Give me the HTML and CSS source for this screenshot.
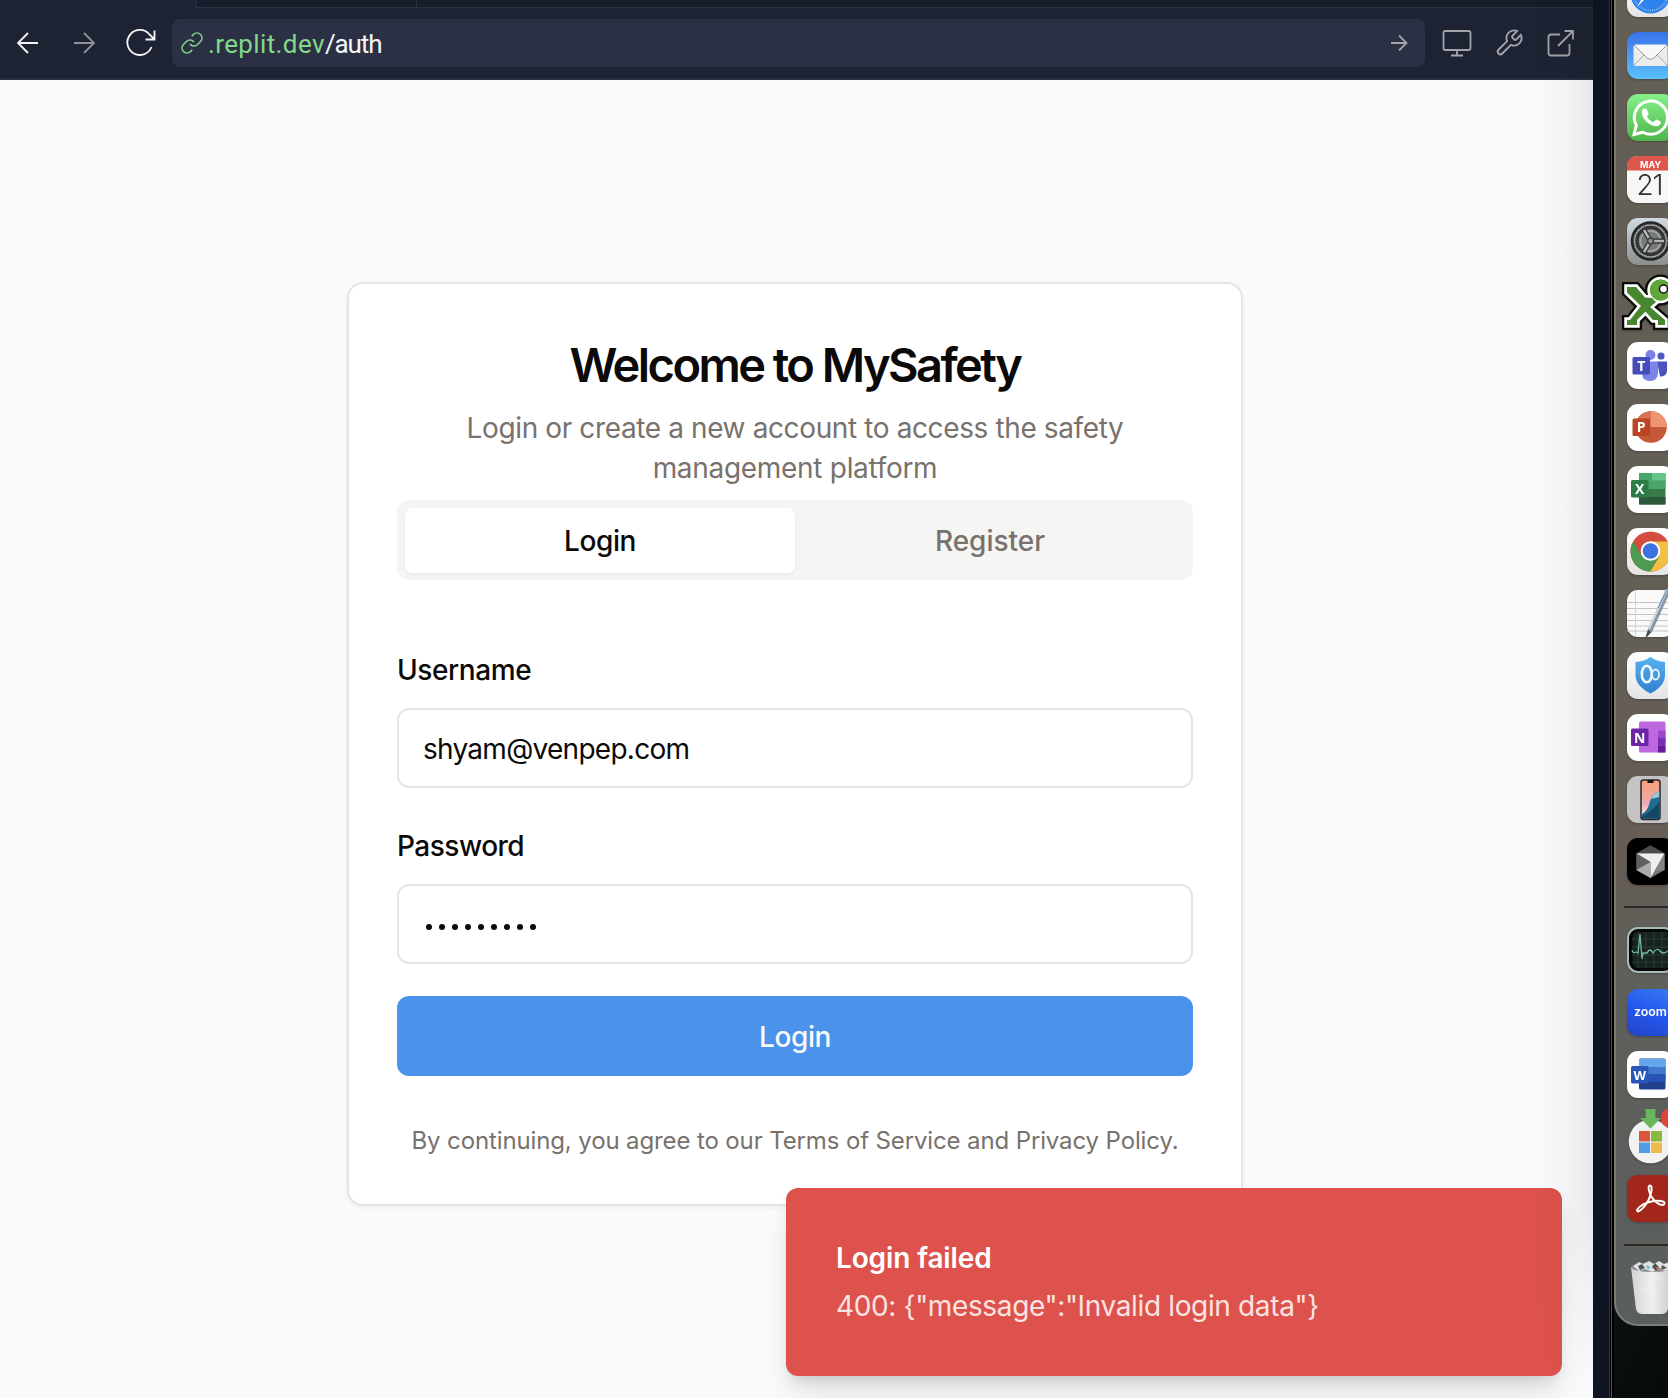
FILE: index.html
```html
<!DOCTYPE html>
<html lang="en">
<head>
<meta charset="utf-8">
<title>MySafety</title>
<link rel="stylesheet" href="styles.css">
</head>
<body>
<div class="desktop">
  <main class="browser">
    <div class="tabstrip"><span class="tab active"></span><span class="tab idle"></span><span class="tab rest"></span></div>
    <header class="toolbar">
      <svg class="nav back" viewBox="0 0 22 22"><path d="M21 11H1M11 1 1 11 11 21"/></svg>
      <svg class="nav forward" viewBox="0 0 22 22"><path d="M1 11H21M11 1 21 11 11 21"/></svg>
      <svg class="reload" viewBox="0 0 30 28"><path d="M25.500 18A12.500 12.500 0 1 1 23.500 5.500L28.500 10.500M28.500 1.500V10.500H19.500"/></svg>
      <div class="address">
        <svg class="link" viewBox="0 0 24 24"><path d="M10 13a5 5 0 0 0 7.540.540l3-3a5 5 0 0 0-7.070-7.070l-1.720 1.710M14 11a5 5 0 0 0-7.540-.540l-3 3a5 5 0 0 0 7.070 7.070l1.710-1.710"/></svg>
        <span class="url"><span class="host">.replit.dev</span><span class="path">/auth</span></span>
        <svg class="go" viewBox="0 0 16 16"><path d="M0 8H15M8 .5 15.500 8 8 15.500"/></svg>
      </div>
      <svg class="tool monitor" viewBox="0 0 30 28"><path d="M3.500 2h23q2 0 2 2v15q0 2-2 2h-23q-2 0-2-2V4q0-2 2-2ZM15 21v5.500M9 26.500h12"/></svg>
      <svg class="tool wrench" viewBox="0 0 24 24"><path d="M14.700 6.300a1 1 0 0 0 0 1.400l1.600 1.600a1 1 0 0 0 1.400 0l3.770-3.770a6 6 0 0 1-7.940 7.940l-6.910 6.910a2.120 2.120 0 0 1-3-3l6.910-6.910a6 6 0 0 1 7.940-7.940l-3.760 3.760z"/></svg>
      <svg class="tool external" viewBox="0 0 28 28"><path d="M13 5.500H4q-2.500 0-2.500 2.500v16q0 2.500 2.500 2.500h16q2.500 0 2.500-2.500v-9M11 17 26 2M17.500 2H26v8.500"/></svg>
    </header>
    <section class="page">
      <form class="card">
        <h1><span>Welcome to MySafety</span></h1>
        <p class="lead"><span class="l1">Login or create a new account to access the safety</span><br><span class="l2">management platform</span></p>
        <div class="tabs"><span class="choice selected">Login</span><span class="choice register">Register</span></div>
        <div class="field first"><label class="user">Username</label><div class="input"><span class="email">shyam@venpep.com</span></div></div>
        <div class="field"><label class="pass">Password</label><div class="input dots"><i></i><i></i><i></i><i></i><i></i><i></i><i></i><i></i><i></i></div></div>
        <div class="submit">Login</div>
        <p class="terms">By continuing, you agree to our Terms of Service and Privacy Policy.</p>
      </form>
    </section>
    <div class="toast"><strong>Login failed</strong><span>400: {"message":"Invalid login data"}</span></div>
    <div class="edge-shade"></div>
  </main>
  <div class="gutter"></div>
  <aside class="side">
    <nav class="dock">
      <svg class="app" viewBox="0 0 47 47"><defs>
        <linearGradient id="tile" x2="0" y2="1"><stop stop-color="#fff"/><stop offset="1" stop-color="#e4e4e4"/></linearGradient>
        <linearGradient id="mail" x2="0" y2="1"><stop stop-color="#3a72ea"/><stop offset="1" stop-color="#5cc0fa"/></linearGradient>
        <linearGradient id="wa" x2="0" y2="1"><stop stop-color="#87f08b"/><stop offset="1" stop-color="#4fb54b"/></linearGradient>
        <linearGradient id="gear" x2="0" y2="1"><stop stop-color="#cfdbe2"/><stop offset="1" stop-color="#8c8e8d"/></linearGradient>
        <linearGradient id="shield" x2="0" y2="1"><stop stop-color="#55b3ee"/><stop offset="1" stop-color="#337fd0"/></linearGradient>
        <linearGradient id="zoombg" x1=".7" y1="0" x2=".3" y2="1"><stop stop-color="#3475ee"/><stop offset=".5" stop-color="#2457ef"/><stop offset="1" stop-color="#2347cc"/></linearGradient>
        <linearGradient id="phone" x2="0" y2="1"><stop stop-color="#f5a178"/><stop offset=".6" stop-color="#efa9b0"/><stop offset="1" stop-color="#fff"/></linearGradient>
        <linearGradient id="bin" x2="1" y2="0"><stop stop-color="#d2d4d3"/><stop offset=".5" stop-color="#f0f0ef"/><stop offset="1" stop-color="#c8c8c8"/></linearGradient>
        </defs><rect width="47" height="47" rx="11" fill="url(#tile)"/><circle cx="23.500" cy="23.500" r="20" fill="#2e82ed"/><circle cx="23.500" cy="23.500" r="17" fill="none" stroke="#a9cbf7" stroke-width="2" stroke-dasharray=".7 1.500"/><path d="M37 10 20 20 10 37Z" fill="#fff"/></svg>

      <svg class="app" viewBox="0 0 47 47"><rect width="47" height="47" rx="11" fill="url(#mail)"/><rect x="6.500" y="12.500" width="34" height="21.500" rx="2" fill="#ececec"/><path d="m7 33 11-11M40 33 29 22" stroke="#aaa" fill="none"/><path d="m7 13 13 13q3.500 3 7 0l13-13" fill="#f7f7f7" stroke="#999"/></svg>

      <svg class="app" viewBox="0 0 47 47"><rect width="47" height="47" rx="11" fill="url(#wa)"/><path d="m7 40.500 2.300-9A16.600 16.600 0 1 1 16 38.200Z" fill="none" stroke="#fff" stroke-width="3"/><path d="M15 17c1-3 4-3 5-1l1.500 3.500c.5 1.500-1 2-1.500 3 1.500 3 3.500 4.500 6.500 5.500 1.500-1 2-3 3.500-2.300l3.500 1.800c1 1-.5 4-3 4.500-6 1.500-17-7-15.500-15" fill="#fff"/></svg>

      <svg class="app" viewBox="0 0 47 47"><rect width="47" height="47" rx="11" fill="#f7f7f5"/><path d="M0 14.500V11Q0 0 11 0h25q11 0 11 11v3.500Z" fill="#df574c"/><text x="23.500" y="11.500" class="month">MAY</text><text x="23" y="39" class="day" textLength="27">21</text></svg>

      <svg class="app" viewBox="0 0 47 47"><rect width="47" height="47" rx="11" fill="url(#gear)"/><circle cx="23.500" cy="23" r="18.500" fill="#a8aaab" stroke="#252627" stroke-width="2.500"/><circle cx="23.500" cy="23" r="17.300" fill="none" stroke="#292a2b" stroke-width="2" stroke-dasharray="1 1"/><circle cx="23.500" cy="23" r="13.500" fill="#8b8d8e" stroke="#333536" stroke-width="3.500"/><circle cx="23.500" cy="23" r="10" fill="#777a7b" stroke="#b1b2b2"/><path d="M23.500 23H36M23.500 23 17 12M23.500 23 17 34" stroke="#292b2c" stroke-width="5"/><path d="M23.500 23H37M23.500 23 17 12M23.500 23 17 34" stroke="#b4b5b6" stroke-width="2.500"/><circle cx="23.500" cy="23" r="3.700" fill="#444"/><circle cx="23.500" cy="23" r="2" fill="#999"/></svg>

      <svg class="app" viewBox="0 0 47 47"><defs><g id="xkey"><path d="M0 7H9L18 17.500 25 18 29 22 23 27 38 40V45H31V40H26L18.500 31.500 10 40V45H0V40H3L14 26 0 12.500Z"/><circle cx="33.500" cy="10" r="10.500"/></g></defs><use href="#xkey" fill="#0a0b09" stroke="#0a0b09" stroke-width="10"/><use href="#xkey" fill="#fff" stroke="#fff" stroke-width="5.500"/><use href="#xkey" fill="#48862f"/><circle cx="33.500" cy="10" r="10.500" fill="#60a63a"/><circle cx="36.500" cy="9" r="4" fill="#fff" stroke="#111" stroke-width="1.500"/></svg>

      <svg class="app" viewBox="0 0 47 47"><rect width="47" height="47" rx="11" fill="#fff"/><circle cx="34" cy="14" r="3.600" fill="#5057c3"/><path d="M30 19.500h10v9q0 6-7 6Z" fill="#4b52bd"/><circle cx="23.500" cy="13" r="5" fill="#7a82e5"/><path d="M15 19.500h16v11q0 8.500-8 8.500-8 0-8-8Z" fill="#7b83e7"/><rect x="5.500" y="15" width="17.500" height="17.500" rx="1.500" fill="#454bb9"/><text x="14.200" y="28.500" class="glyph">T</text></svg>

      <svg class="app" viewBox="0 0 47 47"><rect width="47" height="47" rx="11" fill="#fff"/><circle cx="24" cy="23" r="15.800" fill="#c4593a"/><path d="M24 7.200V23H8.200A15.800 15.800 0 0 1 24 7.200" fill="#dc7253"/><path d="M24 7.200V23h15.800A15.800 15.800 0 0 0 24 7.200" fill="#ed9573"/><rect x="5.500" y="14.500" width="17.500" height="17.500" rx="1.500" fill="#b94525"/><text x="14.200" y="28" class="glyph">P</text></svg>

      <svg class="app" viewBox="0 0 47 47"><rect width="47" height="47" rx="11" fill="#fff"/><rect x="12" y="7" width="26.500" height="31.500" rx="1.500" fill="#397b48"/><path d="M12 7h13v16H12Z" fill="#48a468"/><path d="M25 7h13.500v7.800H25Z" fill="#65c488"/><path d="M25 14.800h13.500V23H25Z" fill="#4ba66c"/><path d="M12 31h26.500v7.500H12Z" fill="#2c5939"/><rect x="4" y="14" width="17.500" height="17.500" rx="1.500" fill="#2d7b46"/><text x="12.700" y="28" class="glyph">X</text></svg>

      <svg class="app" viewBox="0 0 47 47"><rect width="47" height="47" rx="11" fill="url(#tile)"/><circle cx="23.500" cy="23.500" r="20" fill="#d24c3f"/><path d="M6.200 13.500A20 20 0 0 0 23.500 43.500L32 28H15Z" fill="#4d9b50"/><path d="M23.500 43.500A20 20 0 0 0 40.800 13.500H23.500l8.700 15Z" fill="#f1bf42"/><circle cx="23.500" cy="23" r="9.800" fill="#fff"/><circle cx="23.500" cy="23" r="7.800" fill="#3e73df"/></svg>

      <svg class="app" viewBox="0 0 47 47"><rect width="47" height="47" rx="11" fill="#fafafa"/><path d="M0 12.500h47M0 18.500h47M0 24.500h47M0 30.500h47M0 36h47M0 41h47" stroke="#c5c5c5"/><path d="M8.500 0v47" stroke="#efcbc8"/><path d="m39-1 5 1-19 42-7 7 3-10Z" fill="#8a98a6"/><path d="m39-1 2 1-18 39-2 0Z" fill="#ced9e1"/><path d="m18 49 3-9 3 2Z" fill="#494949"/><path d="m31 18 9-18" stroke="#4f86b4"/></svg>

      <svg class="app" viewBox="0 0 47 47"><rect width="47" height="47" rx="11" fill="url(#tile)"/><path d="M23.500 5q6 4.500 14.500 5v13q0 11-14.500 18.500Q8.500 34 8.500 23V10q9-.5 15-5Z" fill="url(#shield)"/><ellipse cx="19.800" cy="22" rx="5" ry="8.300" fill="none" stroke="#f4faff" stroke-width="2.600"/><ellipse cx="28.500" cy="22.500" rx="3.500" ry="5" fill="none" stroke="#e4f3ff" stroke-width="1.800"/></svg>

      <svg class="app" viewBox="0 0 47 47"><rect width="47" height="47" rx="11" fill="#fff"/><rect x="12" y="7.500" width="26.500" height="31" rx="1.500" fill="#bd68df"/><path d="M31 16.500h7.500V24H31Z" fill="#9b48cc"/><path d="M31 24h7.500v7.500H31Z" fill="#7730b3"/><path d="M31 31.500h7.500v7H31Z" fill="#631b9b"/><rect x="4" y="14.500" width="17.500" height="17.500" rx="1.500" fill="#6c23a5"/><text x="12.700" y="28.500" class="glyph">N</text></svg>

      <svg class="app" viewBox="0 0 47 47"><rect width="47" height="47" rx="11" fill="#c4c4c4"/><rect x="14" y="4" width="19" height="39.500" rx="2.500" fill="url(#phone)" stroke="#262529" stroke-width="1.500"/><path d="M32.200 15Q24.500 18 22.500 27q-2 8-7.500 11v4.500h17.200Z" fill="#206d91"/><path d="M32.200 15q-7 3-8 8l8-2Z" fill="#9dc7d7"/><path d="M15 40q9-4 17.200-14v16.700H15Z" fill="#134967"/><path d="M20.500 4h6v3h-6Z" fill="#171719"/></svg>

      <svg class="app" viewBox="0 0 47 47"><rect width="47" height="47" rx="11" fill="#000"/><path d="m23.500 7.500 14 8V32l-14 8-14-8V15.500Z" fill="#777"/><path d="m23.500 7.500 14 8h-28Z" fill="#4c4c4c"/><path d="M9.500 15.500h28L23.500 40V24Z" fill="#eee"/><path d="M9.500 15.500v16.500l14-8Z" fill="#606060"/><path d="m9.500 32 14-8v16Z" fill="#aaa"/><path d="M37.500 15.500V32l-10 1Z" fill="#858585"/></svg>

      <hr class="divider upper">

      <svg class="app" viewBox="0 0 47 47"><rect x="1" y="1" width="46" height="44" rx="10" fill="#050706" stroke="#a9bbb9" stroke-width="2"/><rect x="5.500" y="5" width="41" height="36" rx="5" fill="#17231f"/><path d="M11 5v36M19 5v36M27 5v36M35 5v36M5 12h40M5 20h40M5 28h40M5 35h40" stroke="#2b3d37"/><path d="M5 23q1 4 4 2l2 1 2-19 2 25 1-6h4q3-6 6 0 4-6 7-2 3 4 8 0" fill="none" stroke="#71b99f" stroke-width="1.300"/></svg>

      <svg class="app" viewBox="0 0 47 47"><rect width="47" height="47" rx="11" fill="url(#zoombg)"/><text x="7" y="27" class="zoomword" textLength="33" lengthAdjust="spacingAndGlyphs">zoom</text></svg>

      <svg class="app" viewBox="0 0 47 47"><rect width="47" height="47" rx="11" fill="#fff"/><rect x="12" y="7.500" width="26.500" height="31" rx="1.500" fill="#203f8d"/><path d="M12 8h26.500v8H12Z" fill="#65a7ea"/><path d="M12 16h26.500v7.500H12Z" fill="#4079ce"/><path d="M12 23.500h26.500V31H12Z" fill="#2754b4"/><rect x="4" y="15" width="17.500" height="17.500" rx="1.500" fill="#2857b8"/><text x="12.700" y="28.500" class="glyph w">W</text></svg>

      <svg class="app" viewBox="0 0 47 47"><circle cx="23.500" cy="28.500" r="21.800" fill="#f1f1f1"/><path d="M12 18h11v10.500H12Z" fill="#dc563b"/><path d="M24 18h11v10.500H24Z" fill="#88b93f"/><path d="M12 29.500h11V40H12Z" fill="#4d9de0"/><path d="M24 29.500h11V40H24Z" fill="#f1ba4c"/><path d="M18.500-4h10v9H34L23.500 15.500 13 5h5.500Z" fill="#6ab45e"/><circle cx="43.500" cy="5" r="10" fill="#df4438"/></svg>

      <svg class="app" viewBox="0 0 47 47"><rect width="47" height="47" rx="11" fill="#a22619"/><path d="M10 35c2-4 9-8 17-9 8-1 12 1 10 3.500-3 2-10-3-13-8.500-3-6-3-10.500-1-10.500 3.500 0 1 12-4.500 19.500C14 36 10 38 10 35Z" fill="none" stroke="#fff" stroke-width="2"/></svg>

      <hr class="divider lower">

      <svg class="trash" viewBox="0 0 47 55"><path d="M1 7h42l-5 42q-1 5-7 5H13q-6 0-7-5Z" fill="url(#bin)"/><ellipse cx="22" cy="7.500" rx="20.500" ry="4.500" fill="#898d8e"/><path d="m3 6 6-4 4 2 6-3 5 3 5-3 5 3 5-2 4 5-7 4-7-2-7 3-7-3-6 2Z" fill="#e0e1e1"/><path d="m8 6 4-2 3 4-5 2Zm14 1 3-4 4 4-3 4Zm10-2 5 3-6 2Z" fill="#4c545c"/><path d="m16 5 4 2-2 3Z" fill="#5cbccb"/><path d="m26 7 5 1-3 3Z" fill="#cb7752"/><path d="m12 17 9 4 15-5M9 28l14 4 12-7" stroke="#fff" fill="none" opacity=".3"/></svg>
    </nav>
  </aside>
</div>
</body>
</html>
```
FILE: styles.css
```css
* { box-sizing: border-box; }
body { margin: 0; overflow: hidden; font-family: Inter, "Liberation Sans", sans-serif; color: #0c0a09; }
svg { display: block; flex: none; }
h1, p { margin: 0; white-space: nowrap; }

.desktop { display: grid; grid-template-columns: 1593px 21px 54px; width: 1668px; height: 1398px; overflow: hidden; }
.browser { position: relative; display: grid; grid-template-rows: 8px 72px 1fr; background: #f9fafc; overflow: hidden; }

.tabstrip { display: grid; grid-template-columns: 196px 220px 1fr; background: #1e2333; }
.tab.idle, .tab.rest { background: #171c2a; border-left: 1px solid #2b3040; border-bottom: 1px solid #2b3040; }

.toolbar { display: flex; align-items: center; padding: 0 18px 0 17px; background: #1e2333; border-bottom: 2px solid #2b3040; }
.toolbar svg { fill: none; stroke: #a2a4a9; stroke-width: 1.8; overflow: visible; }
.toolbar .nav { width: 22px; height: 22px; }
.toolbar .back { stroke: #f5f6f8; }
.toolbar .forward { margin-left: 34px; stroke: #8f9298; }
.toolbar .reload { width: 30px; height: 28px; margin-left: 31px; stroke: #f5f6f8; }
.address { display: flex; align-items: center; width: 1253px; height: 48px; margin-left: 16px; padding: 0 18px 0 8px; border-radius: 8px; background: #2b3044; }
.address .link { width: 24px; height: 24px; stroke: #7ed987; stroke-width: 1.6; }
.url { margin-left: 4px; padding-top: 2px; font: 26px/46px Roboto, sans-serif; white-space: nowrap; }
.host { color: #82d987; letter-spacing: .38px; }
.path { color: #f5f6f8; letter-spacing: -1.1px; }
.address .go { width: 16px; height: 16px; margin-left: auto; }
.monitor { width: 30px; height: 28px; margin-left: 17px; }
.toolbar .wrench { width: 30px; height: 30px; margin-left: 22px; stroke-width: 1.5; }
.external { width: 28px; height: 28px; margin-left: 23px; }

.page { padding: 202px 0 0 347px; }
.card { width: 896px; height: 924px; padding: 49px 48px 46px; border: 2px solid #e5e5e4; border-radius: 16px; background: #fff; box-shadow: 0 2px 4px rgba(0, 0, 0, .05); }
h1 { font-size: 47px; font-weight: 600; line-height: 64px; letter-spacing: -2.55px; text-align: center; }
.lead { margin-top: 11px; color: #78716c; font-size: 28px; line-height: 40px; text-align: center; }
.l1 { letter-spacing: -.38px; }
.l2 { letter-spacing: -.3px; }
.tabs { display: grid; grid-template-columns: 1fr 1fr; height: 80px; margin-top: 12px; padding: 8px; border-radius: 12px; background: #f5f5f4; }
.choice { padding-top: 1px; border-radius: 8px; color: #78716c; font-size: 28px; font-weight: 500; line-height: 64px; text-align: center; }
.choice.selected { background: #fff; color: #0c0a09; letter-spacing: -.4px; box-shadow: 0 2px 4px rgba(0, 0, 0, .05); }
.field { display: grid; grid-template-rows: 40px 80px; gap: 18px; margin-top: 38px; }
.field.first { margin-top: 70px; }
label { font-size: 28px; font-weight: 500; line-height: 41px; }
.user { letter-spacing: -.4px; }
.pass { letter-spacing: -.5px; }
.input { display: flex; align-items: center; padding: 2px 24px 0; border: 2px solid #e5e5e4; border-radius: 12px; font-size: 28px; line-height: 40px; }
.email { letter-spacing: -.72px; }
.input.dots { gap: 7px; padding: 5px 27px 0; }
.dots i { width: 6px; height: 6px; border-radius: 50%; background: #0c0a09; }
.submit { height: 80px; margin-top: 32px; padding-top: 1px; border-radius: 12px; background: #4a92ea; color: #f8fafc; font-size: 28px; font-weight: 500; line-height: 80px; letter-spacing: -.4px; text-align: center; }
.terms { margin-top: 49px; color: #78716c; font-size: 24px; line-height: 32px; letter-spacing: -.125px; text-align: center; }

.toast { position: absolute; left: 786px; top: 1188px; width: 776px; height: 188px; display: flex; flex-direction: column; gap: 8px; padding: 50px; border-radius: 12px; background: #dd524c; color: #fff; font-size: 28px; line-height: 40px; white-space: nowrap; box-shadow: 0 20px 30px -6px rgba(0, 0, 0, .12), 0 8px 12px -4px rgba(0, 0, 0, .1); }
.toast strong { font-weight: 600; letter-spacing: -.13px; }
.toast span { color: #fbe3e1; letter-spacing: -.36px; }
.edge-shade { position: absolute; right: 0; top: 0; width: 60px; height: 1398px; background: linear-gradient(90deg, transparent, rgba(15, 20, 20, .022) 50%, rgba(15, 20, 20, .08)); mask-image: linear-gradient(#000 1210px, transparent 1390px); }

.gutter { background: linear-gradient(90deg, #0e1422 16px, #34343a 16px 17px, #000 17px 18px, #56514d 18px 19px, #000 19px); }
.side { background: linear-gradient(120deg, #050708, #10191a 70%, #070a0b); overflow: hidden; }
.dock { display: flex; flex-direction: column; gap: 15px; width: 90px; height: 1358px; margin-top: -32px; padding: 2px 0 0 14px; border: 2px solid #7d7c76; border-width: 0 0 2px 2px; border-radius: 0 0 0 24px; background: linear-gradient(#645f56, #645f56 45%, #655d56 66%, #5f605b 75%, #5a5e5c); }
.app { width: 47px; height: 47px; margin-left: -3px; overflow: visible; filter: drop-shadow(0 1px 1px rgba(0, 0, 0, .25)); }
.divider { flex: none; width: 70px; height: 2px; margin: 6px 0 4px -6px; border: 0; background: #2a2825; }
.divider.lower { margin: 7px 0 -1px -6px; }
.trash { width: 47px; height: 55px; margin-left: 0; }
.month { fill: #fff; font: 700 9px Inter, sans-serif; text-anchor: middle; }
.day { fill: #333; font: 300 28px Inter, sans-serif; text-anchor: middle; }
.glyph { fill: #fff; font: 700 14px "Open Sans", sans-serif; text-anchor: middle; }
.glyph.w { font-size: 13px; }
.zoomword { fill: #fff; font: 600 12px Inter, sans-serif; }
```
